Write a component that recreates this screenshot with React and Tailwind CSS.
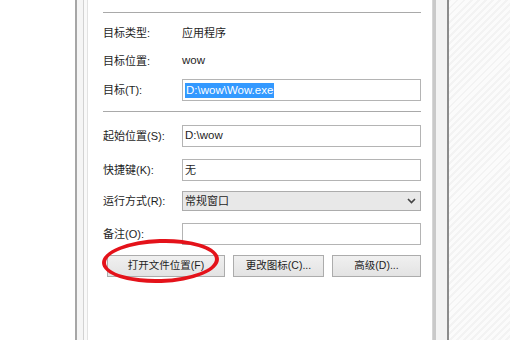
import React from "react";

const font = { fontFamily: '"Liberation Sans", "Noto Sans CJK SC", sans-serif' };

const Label = ({ children }) => (
  <div className="w-[79px] shrink-0 text-[11px] text-[#1e1e1e]">{children}</div>
);

const Box = ({ children, className = "" }) => (
  <div
    className={`flex h-[22px] w-[239px] items-center border border-[#b4b4b4] bg-white px-[2px] text-[11px] text-[#1e1e1e] ${className}`}
  >
    {children}
  </div>
);

const Btn = ({ children, w }) => (
  <div
    className={`flex h-[22px] ${w} items-center justify-center border border-[#acacac] bg-gradient-to-b from-[#f0f0f0] to-[#e3e3e3] text-[10.5px] text-[#1e1e1e]`}
  >
    {children}
  </div>
);

export default function App() {
  return (
    <div className="flex h-[340px] w-[510px] overflow-hidden bg-white" style={font}>
      {/* left side of the window frame */}
      <div className="w-[75px] shrink-0 bg-white" />
      <div className="w-[2px] shrink-0 bg-[#a6a6a6]" />
      <div className="w-[6px] shrink-0 bg-[#f5f5f5]" />
      <div className="w-[1px] shrink-0 bg-[#d2d2d2]" />
      <div className="w-[3px] shrink-0 bg-[#f9f9f9]" />
      <div className="w-[1px] shrink-0 bg-[#e2e2e2]" />

      {/* dialog content */}
      <div className="relative flex w-[344px] shrink-0 flex-col bg-white pl-[15px]">
        <div className="mt-[12px] h-px w-[318px] bg-[#a9a9a9]" />

        <div className="mt-[10px] flex h-[20px] items-center">
          <Label>目标类型:</Label>
          <div className="text-[11px] text-[#1e1e1e]">应用程序</div>
        </div>
        <div className="mt-[8px] flex h-[20px] items-center">
          <Label>目标位置:</Label>
          <div className="text-[11.5px] text-[#1e1e1e]">wow</div>
        </div>
        <div className="mt-[8px] flex h-[22px] items-center">
          <Label>目标(T):</Label>
          <Box className="border-[#8cbbe8]">
            <span className="bg-[#3399ff] px-px text-[11.5px] leading-[15px] text-white">D:\wow\Wow.exe</span>
          </Box>
        </div>

        <div className="mt-[10px] h-px w-[318px] bg-[#a9a9a9]" />

        <div className="mt-[13px] flex h-[22px] items-center">
          <Label>起始位置(S):</Label>
          <Box>
            <span className="text-[11.5px]">D:\wow</span>
          </Box>
        </div>
        <div className="mt-[12px] flex h-[22px] items-center">
          <Label>快捷键(K):</Label>
          <Box>无</Box>
        </div>
        <div className="mt-[10px] flex h-[20px] items-center">
          <Label>运行方式(R):</Label>
          <div className="flex h-[20px] w-[239px] items-center justify-between border border-[#acacac] bg-[#e8e8e8] px-[2px] text-[11px] text-[#1e1e1e]">
            <span>常规窗口</span>
            <svg width="9" height="6" viewBox="0 0 9 6" className="mr-[2px]">
              <path d="M1 1 L4.5 4.5 L8 1" fill="none" stroke="#444" strokeWidth="1.6" />
            </svg>
          </div>
        </div>
        <div className="mt-[12px] flex h-[22px] items-center">
          <Label>备注(O):</Label>
          <Box />
        </div>

        <div className="mt-[10px] flex gap-[8px] pl-[4px]">
          <Btn w="w-[118px]">打开文件位置(F)</Btn>
          <Btn w="w-[91px]">更改图标(C)...</Btn>
          <Btn w="w-[89px]">高级(D)...</Btn>
        </div>

        {/* red highlight circle drawn over the button */}
        <div className="absolute left-[14px] top-[239px] h-[44px] w-[117px] -rotate-2 rounded-[50%] border-[4px] border-[#e4121a]" />
      </div>

      {/* right side of the window frame */}
      <div className="w-[1px] shrink-0 bg-[#d6d6d6]" />
      <div className="w-[3px] shrink-0 bg-[#c9c9c9]" />
      <div className="w-[11px] shrink-0 bg-[#f3f3f3]" />
      <div className="w-[2px] shrink-0 bg-[#8c8c8c]" />
      <div className="flex-1 bg-[repeating-linear-gradient(135deg,#f3f3f3_0px,#f3f3f3_2px,#fbfbfb_2px,#fbfbfb_5px)]" />
    </div>
  );
}
